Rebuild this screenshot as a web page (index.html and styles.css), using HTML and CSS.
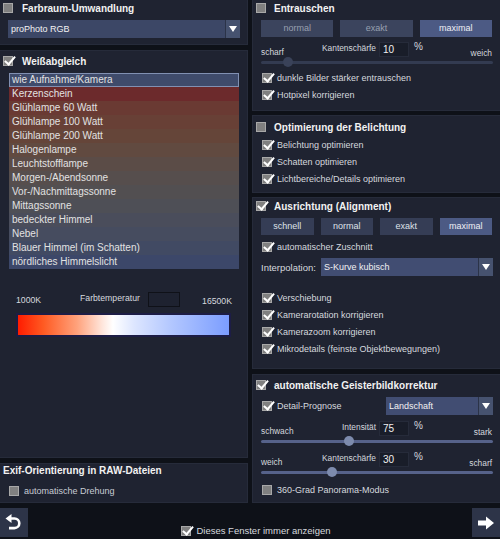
FILE: index.html
```html
<!DOCTYPE html>
<html>
<head>
<meta charset="utf-8">
<link rel="stylesheet" href="styles.css">
</head>
<body>
<div class="app">
  <div class="col">
    <section class="panel p-farbraum">
      <div class="head"><span class="cb"></span><span class="title">Farbraum-Umwandlung</span></div>
      <div class="select sel-farbraum"><span class="val">proPhoto RGB</span><span class="arrow"></span></div>
    </section>
    <section class="panel p-wb">
      <div class="head head-wb"><span class="cb on"></span><span class="title">Weißabgleich</span></div>
      <ul class="list">
        <li>wie Aufnahme/Kamera</li>
        <li>Kerzenschein</li>
        <li>Glühlampe 60 Watt</li>
        <li>Glühlampe 100 Watt</li>
        <li>Glühlampe 200 Watt</li>
        <li>Halogenlampe</li>
        <li>Leuchtstofflampe</li>
        <li>Morgen-/Abendsonne</li>
        <li>Vor-/Nachmittagssonne</li>
        <li>Mittagssonne</li>
        <li>bedeckter Himmel</li>
        <li>Nebel</li>
        <li>Blauer Himmel (im Schatten)</li>
        <li>nördliches Himmelslicht</li>
      </ul>
      <div class="temp-row">
        <span class="t-min">1000K</span>
        <span class="t-mid"><span>Farbtemperatur</span><span class="t-box"></span></span>
        <span class="t-max">16500K</span>
      </div>
      <div class="temp-bar"></div>
    </section>
    <section class="panel p-exif">
      <div class="exif-title">Exif-Orientierung in RAW-Dateien</div>
      <label class="row row-exif"><span class="cb"></span>automatische Drehung</label>
    </section>
  </div>
  <div class="col">
    <section class="panel p-ent">
      <div class="head"><span class="cb"></span><span class="title">Entrauschen</span></div>
      <div class="btns dim">
        <span class="btn">normal</span><span class="btn">exakt</span><span class="btn active">maximal</span>
      </div>
      <div class="slider-labels">
        <div class="sl-left"><span class="side">scharf</span><span class="lbl">Kantenschärfe</span></div>
        <span class="num">10</span>
        <div class="sl-right"><span class="pct">%</span><span class="side">weich</span></div>
      </div>
      <div class="track dim-track"><span class="thumb thumb-ent"></span></div>
      <label class="row"><span class="cb on"></span>dunkle Bilder stärker entrauschen</label>
      <label class="row"><span class="cb on"></span>Hotpixel korrigieren</label>
    </section>
    <section class="panel p-opt">
      <div class="head"><span class="cb"></span><span class="title">Optimierung der Belichtung</span></div>
      <label class="row"><span class="cb on"></span>Belichtung optimieren</label>
      <label class="row"><span class="cb on"></span>Schatten optimieren</label>
      <label class="row"><span class="cb on"></span>Lichtbereiche/Details optimieren</label>
    </section>
    <section class="panel p-aus">
      <div class="head"><span class="cb on"></span><span class="title">Ausrichtung (Alignment)</span></div>
      <div class="btns">
        <span class="btn">schnell</span><span class="btn">normal</span><span class="btn">exakt</span><span class="btn active">maximal</span>
      </div>
      <label class="row row-zu"><span class="cb on"></span>automatischer Zuschnitt</label>
      <div class="interp">
        <span class="interp-label">Interpolation:</span>
        <div class="select sel-interp"><span class="val">S-Kurve kubisch</span><span class="arrow"></span></div>
      </div>
      <label class="row row-ver"><span class="cb on"></span>Verschiebung</label>
      <label class="row"><span class="cb on"></span>Kamerarotation korrigieren</label>
      <label class="row"><span class="cb on"></span>Kamerazoom korrigieren</label>
      <label class="row"><span class="cb on"></span>Mikrodetails (feinste Objektbewegungen)</label>
    </section>
    <section class="panel p-geist">
      <div class="head head-geist"><span class="cb on"></span><span class="title">automatische Geisterbildkorrektur</span></div>
      <div class="detail">
        <label class="row row-detail"><span class="cb on"></span>Detail-Prognose</label>
        <div class="select sel-detail"><span class="val">Landschaft</span><span class="arrow"></span></div>
      </div>
      <div class="slider-labels sl-1">
        <div class="sl-left"><span class="side">schwach</span><span class="lbl">Intensität</span></div>
        <span class="num">75</span>
        <div class="sl-right"><span class="pct">%</span><span class="side">stark</span></div>
      </div>
      <div class="track"><span class="thumb thumb-int"></span></div>
      <div class="slider-labels sl-2">
        <div class="sl-left"><span class="side">weich</span><span class="lbl">Kantenschärfe</span></div>
        <span class="num">30</span>
        <div class="sl-right"><span class="pct">%</span><span class="side">scharf</span></div>
      </div>
      <div class="track"><span class="thumb thumb-kant"></span></div>
      <label class="row row-pano"><span class="cb"></span>360-Grad Panorama-Modus</label>
    </section>
  </div>
</div>
<div class="bottom">
  <span class="nav-btn">
    <svg width="20" height="20" viewBox="0 0 20 20"><path d="M7 5.5 H10.5 A4.8 4.8 0 0 1 10.5 15.1 H5" fill="none" stroke="#fff" stroke-width="2.6"/><polygon points="1.5,5.5 7.5,1 7.5,10" fill="#fff"/></svg>
  </span>
  <label class="row row-show"><span class="cb on"></span>Dieses Fenster immer anzeigen</label>
  <span class="nav-btn">
    <svg width="20" height="20" viewBox="0 0 20 20"><path d="M2 7.5 H10 V3.5 L18 10 L10 16.5 V12.5 H2 Z" fill="#fff"/></svg>
  </span>
</div>
</body>
</html>
```
FILE: styles.css
```css
* { box-sizing: border-box; }
html, body { margin: 0; padding: 0; }
body {
  width: 500px;
  height: 539px;
  background: #0e1118;
  font-family: "Liberation Sans", Arial, sans-serif;
  font-size: 9.5px;
  color: #d6d9df;
  overflow: hidden;
}
.app {
  display: grid;
  grid-template-columns: 248px 248px;
  column-gap: 4px;
  height: 503px;
}
.col { display: flex; flex-direction: column; }
.panel {
  background: #1f2331;
  border: 1px solid #262b3a;
  display: flex;
  flex-direction: column;
}
.col:first-child .panel { border-left: none; }
.col:last-child .panel { border-right: none; }

.p-farbraum { height: 45px; border-top: none; }
.p-wb { height: 408px; margin-top: 5px; }
.p-exif { height: 40px; margin-top: 5px; }
.p-ent { height: 111px; border-top: none; }
.p-opt { height: 78px; margin-top: 4px; }
.p-aus { height: 172px; margin-top: 4px; }
.p-geist { height: 129px; margin-top: 5px; }

.head {
  display: flex;
  align-items: center;
  gap: 9px;
  height: 16px;
  padding-left: 3px;
  flex: none;
}
.p-opt .head { height: 19px; padding-top: 3px; }
.head-wb { height: 18px; padding-top: 2px; }
.head-geist { height: 18px; padding-top: 2px; }
.col:last-child .head { padding-left: 3px; gap: 8px; }
.title { font-weight: bold; color: #f2f2f2; font-size: 10px; }

.cb {
  position: relative;
  width: 10px;
  height: 10px;
  flex: none;
  background: #808080;
  border: 1px solid #a8a8a8;
}
.cb.on::after {
  content: "";
  position: absolute;
  left: 3px;
  top: -3px;
  width: 4px;
  height: 9px;
  border-right: 2px solid #fff;
  border-bottom: 2px solid #fff;
  transform: rotate(40deg);
}

.select {
  display: flex;
  height: 18px;
  background: #3c4766;
  color: #f2f2f2;
  align-items: stretch;
  font-size: 9px;
}
.select .val { flex: 1; padding-left: 3px; line-height: 18px; }
.select .arrow {
  width: 15px;
  background: #46526f;
  border-left: 1px solid #2b3348;
  position: relative;
}
.select .arrow::after {
  content: "";
  position: absolute;
  left: 3px;
  top: 6px;
  border-left: 4.5px solid transparent;
  border-right: 4.5px solid transparent;
  border-top: 6px solid #fff;
}
.sel-farbraum { margin: 4px 7px 0 8px; }

.list {
  list-style: none;
  margin: 4px 8px 0 9px;
  padding: 0;
  font-size: 10px;
}
.list li {
  height: 14px;
  line-height: 14px;
  padding-left: 3px;
  color: #e2e2e2;
}
.list li:nth-child(1) { background: #3f4b6b; border: 1px solid #8190b2; line-height: 12px; padding-left: 2px; }
.list li:nth-child(2) { background: #6c2a2c; }
.list li:nth-child(3) { background: #6a3a33; }
.list li:nth-child(4) { background: #684036; }
.list li:nth-child(5) { background: #654539; }
.list li:nth-child(6) { background: #614a40; }
.list li:nth-child(7) { background: #5b4c47; }
.list li:nth-child(8) { background: #564e4d; }
.list li:nth-child(9) { background: #524f51; }
.list li:nth-child(10) { background: #4e4f56; }
.list li:nth-child(11) { background: #4a4d5b; }
.list li:nth-child(12) { background: #464c5f; }
.list li:nth-child(13) { background: #414a63; }
.list li:nth-child(14) { background: #3c4769; }

.temp-row {
  display: flex;
  align-items: flex-end;
  margin: 23px 15px 0 16px;
  height: 15px;
  font-size: 8.7px;
}
.t-min { width: 64px; line-height: 10px; padding-bottom: 2px; }
.t-max { margin-left: auto; line-height: 10px; padding-bottom: 1px; }
.t-mid { display: flex; align-items: flex-start; gap: 8px; height: 15px; }
.t-mid > span:first-child { line-height: 10px; padding-top: 1px; }
.t-box {
  width: 32px;
  height: 15px;
  border: 1px solid #0f1118;
  background: #1e2230;
}
.temp-bar {
  margin: 6px 16px 0 16px;
  height: 24px;
  border: 2px solid #1d1d46;
  background: linear-gradient(to right, #ff1c00 0%, #ff5a22 12%, #ffa27c 28%, #ffe6dc 40%, #ffffff 45%, #dde6ff 55%, #b4c8ff 72%, #7b9dff 100%);
}

.exif-title {
  font-weight: bold;
  font-size: 10px;
  color: #f2f2f2;
  padding: 1px 0 0 3px;
  height: 16px;
  line-height: 12px;
}
.row {
  display: flex;
  align-items: center;
  gap: 5px;
  height: 17px;
  padding-left: 9px;
  flex: none;
  font-size: 9px;
}
.row-exif { margin-top: 2px; padding-left: 9px; color: #c8ccd4; }

.btns {
  display: flex;
  gap: 7px;
  margin: 4px 8px 0 8px;
  height: 17px;
}
.btn {
  flex: 1;
  background: #353d55;
  color: #dfe2e8;
  text-align: center;
  line-height: 17px;
  font-size: 9px;
}
.btns.dim .btn { background: #3b445d; color: #98a0b0; }
.btn.active, .btns.dim .btn.active { background: #4c5a84; color: #eef0f4; }

.slider-labels {
  display: flex;
  margin: 5px 8px 0 8px;
  height: 16px;
  font-size: 8.4px;
}
.sl-left {
  width: 118px;
  display: flex;
  justify-content: space-between;
  padding-right: 3px;
}
.sl-right {
  flex: 1;
  display: flex;
  justify-content: space-between;
  padding-left: 5px;
}
.side { align-self: flex-end; line-height: 10px; padding-bottom: 1px; }
.sl-right .side { padding-bottom: 0; }
.lbl { align-self: flex-start; line-height: 10px; padding-top: 1px; }
.num {
  width: 30px;
  height: 15px;
  background: #191d29;
  border: 1px solid #262b3a;
  color: #f0f0f0;
  font-size: 10px;
  padding-left: 3px;
  line-height: 13px;
}
.pct { align-self: flex-start; font-size: 10px; line-height: 10px; }
.track {
  position: relative;
  margin: 0 7px 0 8px;
  height: 8px;
}
.track::before {
  content: "";
  position: absolute;
  left: 0; right: 0; top: 3px;
  height: 3px;
  background: #56628a;
  border-radius: 2px;
}
.dim-track::before { background: #333b51; }
.thumb {
  position: absolute;
  top: -1px;
  width: 10px;
  height: 10px;
  border-radius: 50%;
  background: #7d8bad;
}
.dim-track .thumb { background: #3a4259; }
.thumb-ent { left: 22px; }
.thumb-int { left: 83px; }
.thumb-kant { left: 66px; }

.p-ent .track + .row { margin-top: 3px; }
.p-opt .row:first-of-type { margin-top: 1px; }
.row-zu { margin-top: 3px; }
.interp {
  display: flex;
  align-items: center;
  margin: 3px 7px 0 8px;
  height: 18px;
}
.interp-label { width: 60px; }
.sel-interp { flex: 1; background: #414d72; height: 18px; }
.row-ver { margin-top: 13px; }

.detail {
  display: flex;
  align-items: center;
  margin: 4px 7px 0 0;
  height: 18px;
}
.row-detail { flex: 1; }
.sel-detail { width: 107px; background: #414d72; }
.sl-1 { margin-top: 6px; }
.sl-2 { margin-top: 7px; }
.row-pano { margin-top: 5px; }

.bottom {
  display: flex;
  align-items: flex-start;
  justify-content: space-between;
  height: 36px;
  padding-top: 5px;
}
.nav-btn {
  width: 28px;
  height: 29px;
  background: #2d3448;
  display: flex;
  align-items: center;
  justify-content: center;
}
.row-show { margin-top: 14px; padding-left: 0; color: #d6d9df; margin-left: 12px; font-size: 9.5px; }
```
